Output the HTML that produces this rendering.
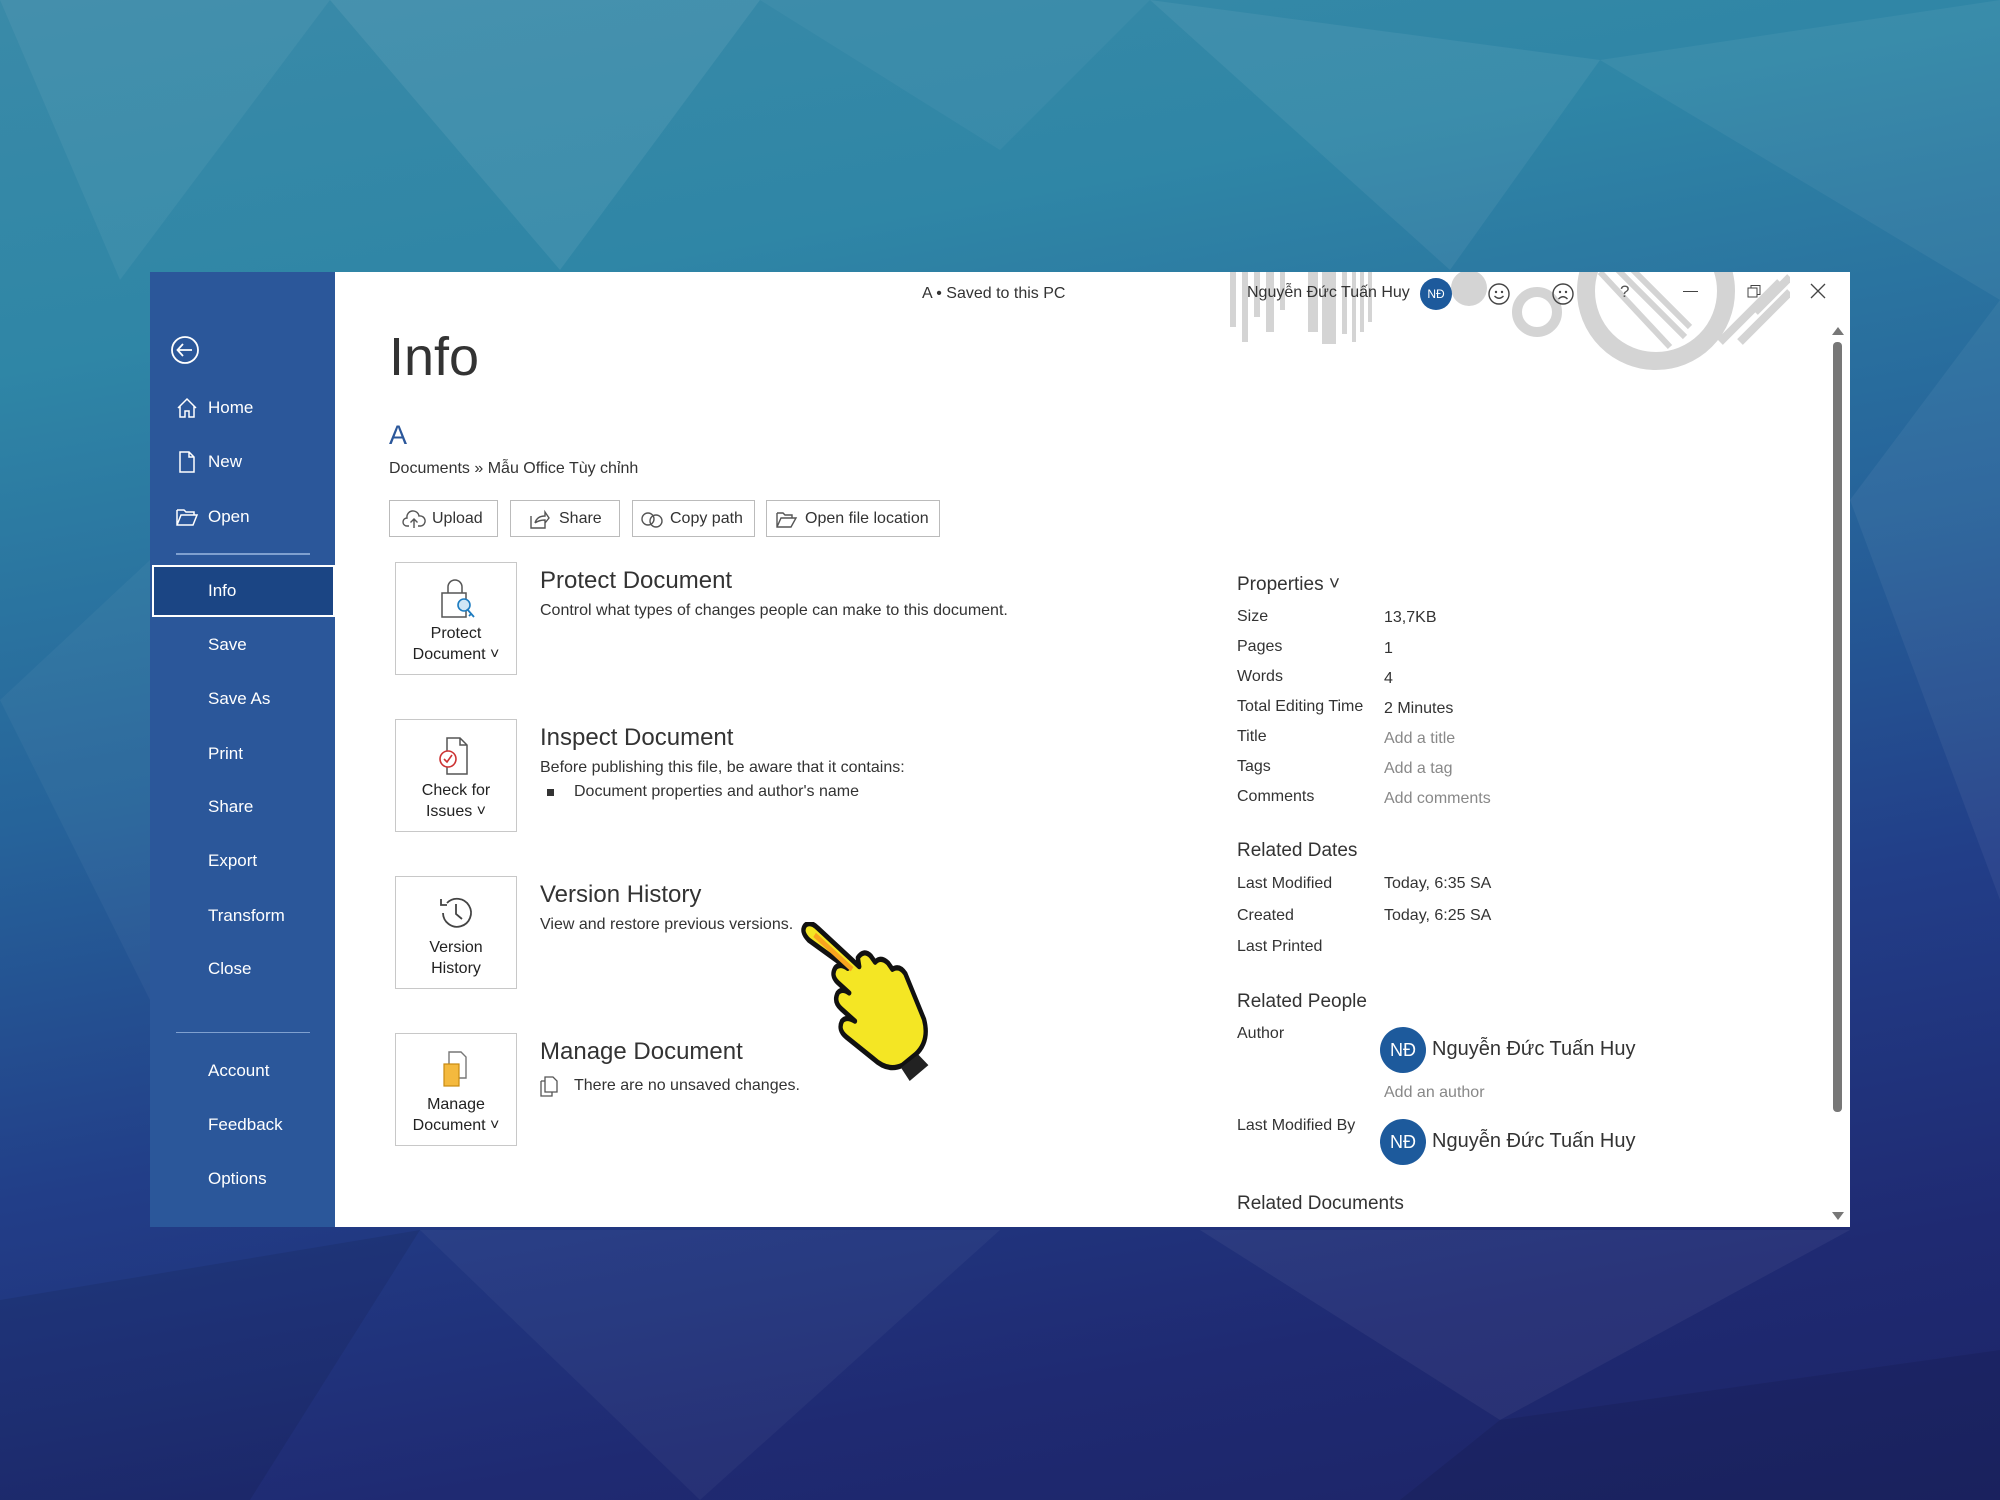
<!DOCTYPE html>
<html><head><meta charset="utf-8"><style>
*{margin:0;padding:0;box-sizing:border-box}
body{width:2000px;height:1500px;overflow:hidden;position:relative;font-family:"Liberation Sans","Noto Sans CJK SC",sans-serif;
background:linear-gradient(170deg,#3a8aa8 0%,#2f86a6 20%,#26639a 45%,#223e88 65%,#1f2a72 85%,#1d2466 100%);}
.a{position:absolute;white-space:nowrap}
#win{position:absolute;left:150px;top:272px;width:1700px;height:955px;background:#fff;overflow:hidden}
#side{position:absolute;left:0;top:0;width:185px;height:955px;background:#2b579a}
.m{position:absolute;left:58px;color:#fff;font-size:17px}
.ic{position:absolute;left:25px}
.btn{position:absolute;top:228px;height:37px;border:1px solid #bbb;background:#fff;font-size:16px;color:#333;line-height:35px;padding-left:14px}
.big{position:absolute;left:245px;width:122px;height:113px;border:1px solid #c8c8c8;text-align:center;font-size:16px;color:#222;line-height:21px}
.h{position:absolute;left:390px;font-size:24px;color:#333}
.d{position:absolute;left:390px;font-size:16px;color:#333}
.l{position:absolute;left:1087px;font-size:16px;color:#333}
.v{position:absolute;left:1234px;font-size:16px;color:#333}
.g{color:#888}
.sh{position:absolute;left:1087px;font-size:19px;color:#333}
</style></head><body>
<svg class="a" style="left:0;top:0" width="2000" height="1500">
 <g fill="#fff">
  <polygon points="0,0 330,0 120,280" opacity="0.05"/>
  <polygon points="330,0 760,0 560,270" opacity="0.07"/>
  <polygon points="760,0 1150,0 1000,150" opacity="0.04"/>
  <polygon points="1150,0 1600,60 1450,270" opacity="0.06"/>
  <polygon points="1600,60 2000,0 2000,300" opacity="0.05"/>
  <polygon points="0,700 150,560 150,1000" opacity="0.04"/>
  <polygon points="1850,500 2000,300 2000,900" opacity="0.05"/>
  <polygon points="420,1230 1000,1230 700,1500" opacity="0.04"/>
  <polygon points="1200,1230 1850,1230 1500,1420" opacity="0.05"/>
 </g>
 <g fill="#000">
  <polygon points="0,1300 420,1230 250,1500 0,1500" opacity="0.08"/>
  <polygon points="1500,1420 2000,1350 2000,1500 1400,1500" opacity="0.08"/>
 </g>
</svg>
<div id="win">
 <svg class="a" style="left:1080px;top:0" width="560" height="110" viewBox="0 0 560 110">
  <g fill="#d4d4d4">
   <rect x="0" y="0" width="6" height="55"/><rect x="12" y="0" width="6" height="70"/><rect x="24" y="0" width="6" height="45"/>
   <rect x="36" y="0" width="8" height="60"/><rect x="50" y="0" width="5" height="38"/>
   <rect x="78" y="0" width="10" height="60"/><rect x="92" y="0" width="14" height="72"/><rect x="112" y="0" width="5" height="62"/>
   <rect x="122" y="0" width="4" height="70"/><rect x="130" y="0" width="4" height="60"/><rect x="138" y="0" width="4" height="50"/>
   <circle cx="239" cy="16" r="18"/>
  </g>
  <circle cx="307" cy="40" r="20" fill="none" stroke="#d4d4d4" stroke-width="10"/>
  <circle cx="426" cy="19" r="70" fill="none" stroke="#d4d4d4" stroke-width="18"/>
  <g stroke="#d4d4d4" stroke-width="6"><line x1="370" y1="0" x2="440" y2="75"/><line x1="385" y1="-5" x2="455" y2="65"/><line x1="400" y1="-5" x2="460" y2="55"/></g>
  <g stroke="#d4d4d4" stroke-width="8"><line x1="490" y1="70" x2="550" y2="10"/><line x1="510" y1="70" x2="560" y2="20"/><line x1="525" y1="40" x2="560" y2="5"/></g>
 </svg>
 <div id="side">
  <svg class="ic" style="top:63px;left:20px" width="30" height="30"><circle cx="15" cy="15" r="13" fill="none" stroke="#fff" stroke-width="1.8"/><path d="M22 15H8M13 9L7.5 15L13 21" fill="none" stroke="#fff" stroke-width="1.8"/></svg>
  <svg class="ic" style="top:124px" width="24" height="24"><path d="M3 12L12 3L21 12M5 10V21H10V15H14V21H19V10" fill="none" stroke="#fff" stroke-width="1.5"/></svg>
  <div class="m" style="top:126px">Home</div>
  <svg class="ic" style="top:178px" width="24" height="24"><path d="M5 2H14L19 7V22H5ZM14 2V7H19" fill="none" stroke="#fff" stroke-width="1.5"/></svg>
  <div class="m" style="top:180px">New</div>
  <svg class="ic" style="top:233px" width="24" height="24"><path d="M2 5H9L11 7H19V10M2 5V20H18L22 10H6L2 20" fill="none" stroke="#fff" stroke-width="1.5"/></svg>
  <div class="m" style="top:235px">Open</div>
  <div class="a" style="left:26px;top:281px;width:134px;height:2px;background:#7fa0cf"></div>
  <div class="a" style="left:2px;top:293px;width:183px;height:52px;background:#1b4584;border:2px solid #fff"></div>
  <div class="m" style="top:309px">Info</div>
  <div class="m" style="top:363px">Save</div>
  <div class="m" style="top:417px">Save As</div>
  <div class="m" style="top:472px">Print</div>
  <div class="m" style="top:525px">Share</div>
  <div class="m" style="top:579px">Export</div>
  <div class="m" style="top:634px">Transform</div>
  <div class="m" style="top:687px">Close</div>
  <div class="a" style="left:26px;top:760px;width:134px;height:1px;background:#7fa0cf"></div>
  <div class="m" style="top:789px">Account</div>
  <div class="m" style="top:843px">Feedback</div>
  <div class="m" style="top:897px">Options</div>
 </div>
 <div class="a" style="left:772px;top:13px;font-size:16px;color:#333">A • Saved to this PC</div>
 <div class="a" style="left:1097px;top:12px;font-size:16px;color:#333">Nguyễn Đức Tuấn Huy</div>
 <div class="a" style="left:1270px;top:6px;width:32px;height:32px;border-radius:50%;background:#1d5a9c;color:#fff;font-size:12px;text-align:center;line-height:32px">NĐ</div>
 <svg class="a" style="left:1337px;top:10px" width="24" height="24"><circle cx="12" cy="12" r="10" fill="none" stroke="#444" stroke-width="1.4"/><circle cx="9" cy="10" r="1.2" fill="#444"/><circle cx="15" cy="10" r="1.2" fill="#444"/><path d="M7.5 14Q12 18.5 16.5 14" fill="none" stroke="#444" stroke-width="1.4"/></svg>
 <svg class="a" style="left:1401px;top:10px" width="24" height="24"><circle cx="12" cy="12" r="10" fill="none" stroke="#444" stroke-width="1.4"/><circle cx="9" cy="10" r="1.2" fill="#444"/><circle cx="15" cy="10" r="1.2" fill="#444"/><path d="M7.5 17Q12 12.5 16.5 17" fill="none" stroke="#444" stroke-width="1.4"/></svg>
 <div class="a" style="left:1470px;top:10px;font-size:17px;color:#555">?</div>
 <div class="a" style="left:1533px;top:19px;width:15px;height:1px;background:#444"></div>
 <svg class="a" style="left:1596px;top:12px" width="16" height="16"><rect x="2" y="4" width="9" height="9" fill="none" stroke="#444"/><path d="M5 4V1.5H14V10.5H11" fill="none" stroke="#444"/></svg>
 <svg class="a" style="left:1660px;top:11px" width="16" height="16"><path d="M1 1L15 15M15 1L1 15" stroke="#444" stroke-width="1.3"/></svg>
 <div class="a" style="left:239px;top:54px;font-size:54px;color:#333;font-weight:300">Info</div>
 <div class="a" style="left:239px;top:148px;font-size:27px;color:#2b579a">A</div>
 <div class="a" style="left:239px;top:188px;font-size:16px;color:#333">Documents » Mẫu Office Tùy chỉnh</div>
 <div class="btn" style="left:239px;width:109px;padding-left:42px">Upload</div>
 <svg class="a" style="left:252px;top:238px" width="24" height="20"><path d="M7 16H5A4 4 0 0 1 5 8A6 6 0 0 1 17 6A5 5 0 0 1 19 16H16M12 18V9M8.5 12.5L12 9L15.5 12.5" fill="none" stroke="#555" stroke-width="1.4"/></svg>
 <div class="btn" style="left:360px;width:110px;padding-left:48px">Share</div>
 <svg class="a" style="left:378px;top:236px" width="22" height="22"><path d="M3 8V20H17V15M7 15Q9 8 17 8V4L21 10L17 15V12Q11 12 7 15" fill="none" stroke="#555" stroke-width="1.4"/></svg>
 <div class="btn" style="left:482px;width:123px;padding-left:37px">Copy path</div>
 <svg class="a" style="left:490px;top:240px" width="26" height="16"><circle cx="8" cy="7" r="6" fill="none" stroke="#555" stroke-width="1.4"/><circle cx="16" cy="9" r="6" fill="none" stroke="#555" stroke-width="1.4"/></svg>
 <div class="btn" style="left:616px;width:174px;padding-left:38px">Open file location</div>
 <svg class="a" style="left:625px;top:238px" width="24" height="20"><path d="M2 3H8L10 5H17V8M2 3V17H16L21 8H6L2 17" fill="none" stroke="#555" stroke-width="1.4"/></svg>

 <div class="big" style="top:290px"><svg style="display:block;margin:14px auto 2px" width="44" height="44"><path d="M14 16V10A7 7 0 0 1 28 10V16M8 16H32V40H8Z" fill="none" stroke="#555" stroke-width="1.5"/><circle cx="30" cy="28" r="6" fill="#cfe6f5" stroke="#1e7cc0" stroke-width="1.6"/><path d="M33 32L40 40M37 37L35 39" stroke="#1e7cc0" stroke-width="1.8"/></svg>Protect<br>Document ˅</div>
 <div class="h" style="top:295px">Protect Document</div>
 <div class="d" style="top:330px">Control what types of changes people can make to this document.</div>

 <div class="big" style="top:447px"><svg style="display:block;margin:14px auto 2px" width="44" height="44"><path d="M13 4H26L33 11V40H13Z M26 4V11H33" fill="#fff" stroke="#555" stroke-width="1.5"/><circle cx="14" cy="25" r="8" fill="#fff" stroke="#c33" stroke-width="1.6"/><path d="M10 25L13 28L18 21" fill="none" stroke="#c33" stroke-width="1.6"/></svg>Check for<br>Issues ˅</div>
 <div class="h" style="top:452px">Inspect Document</div>
 <div class="d" style="top:487px">Before publishing this file, be aware that it contains:</div>
 <div class="a" style="left:397px;top:517px;width:7px;height:7px;background:#333"></div>
 <div class="d" style="left:424px;top:511px">Document properties and author's name</div>

 <div class="big" style="top:604px"><svg style="display:block;margin:14px auto 2px" width="44" height="44"><path d="M9 22A14 14 0 1 0 13 12M7 8V14H13M22 13V23L28 28" fill="none" stroke="#444" stroke-width="1.8"/></svg>Version<br>History</div>
 <div class="h" style="top:609px">Version History</div>
 <div class="d" style="top:644px">View and restore previous versions.</div>

 <div class="big" style="top:761px"><svg style="display:block;margin:14px auto 2px" width="44" height="44"><path d="M15 4H27L32 9V30H15Z" fill="#fff" stroke="#777" stroke-width="1.4"/><rect x="10" y="16" width="15" height="22" fill="#f4b93e" stroke="#c98a10" stroke-width="1.2"/></svg>Manage<br>Document ˅</div>
 <div class="h" style="top:766px">Manage Document</div>
 <svg class="a" style="left:388px;top:803px" width="22" height="22"><path d="M7 2H15L19 6V17H7Z M3 6H7M3 6V21H14V17" fill="none" stroke="#555" stroke-width="1.3"/></svg>
 <div class="d" style="left:424px;top:805px">There are no unsaved changes.</div>

 <div class="sh" style="top:302px">Properties ˅</div>
 <div class="l" style="top:336px">Size</div><div class="v" style="top:337px">13,7KB</div>
 <div class="l" style="top:366px">Pages</div><div class="v" style="top:368px">1</div>
 <div class="l" style="top:396px">Words</div><div class="v" style="top:398px">4</div>
 <div class="l" style="top:426px">Total Editing Time</div><div class="v" style="top:428px">2 Minutes</div>
 <div class="l" style="top:456px">Title</div><div class="v g" style="top:458px">Add a title</div>
 <div class="l" style="top:486px">Tags</div><div class="v g" style="top:488px">Add a tag</div>
 <div class="l" style="top:516px">Comments</div><div class="v g" style="top:518px">Add comments</div>
 <div class="sh" style="top:568px">Related Dates</div>
 <div class="l" style="top:603px">Last Modified</div><div class="v" style="top:603px">Today, 6:35 SA</div>
 <div class="l" style="top:635px">Created</div><div class="v" style="top:635px">Today, 6:25 SA</div>
 <div class="l" style="top:666px">Last Printed</div>
 <div class="sh" style="top:719px">Related People</div>
 <div class="l" style="top:753px">Author</div>
 <div class="a" style="left:1230px;top:755px;width:46px;height:46px;border-radius:50%;background:#1d5a9c;color:#fff;font-size:18px;text-align:center;line-height:46px">NĐ</div>
 <div class="a" style="left:1282px;top:766px;font-size:20px;color:#333">Nguyễn Đức Tuấn Huy</div>
 <div class="v g" style="top:812px">Add an author</div>
 <div class="l" style="top:845px">Last Modified By</div>
 <div class="a" style="left:1230px;top:847px;width:46px;height:46px;border-radius:50%;background:#1d5a9c;color:#fff;font-size:18px;text-align:center;line-height:46px">NĐ</div>
 <div class="a" style="left:1282px;top:858px;font-size:20px;color:#333">Nguyễn Đức Tuấn Huy</div>
 <div class="sh" style="top:921px">Related Documents</div>

 <div class="a" style="left:1683px;top:70px;width:9px;height:770px;border-radius:4px;background:#777"></div>
 <div class="a" style="left:1682px;top:55px;width:0;height:0;border-left:6px solid transparent;border-right:6px solid transparent;border-bottom:8px solid #777"></div>
 <div class="a" style="left:1682px;top:940px;width:0;height:0;border-left:6px solid transparent;border-right:6px solid transparent;border-top:8px solid #777"></div>

 <svg class="a" style="left:648px;top:650px" width="290" height="200" viewBox="648 650 290 200">
  <g transform="translate(656 655) scale(0.72 0.88) translate(-656 -655)">
  <path d="M660 670Q648 660 655 653Q662 648 672 656L730 700L728 690Q736 680 746 688L752 695Q760 688 770 696L776 703Q786 698 794 708L820 760Q828 785 808 800L790 812Q770 820 750 805L712 780Q700 772 706 762Q712 756 724 762L705 748Q694 740 700 730Q706 724 716 730L700 718Q690 710 697 701Q704 696 714 702Z" fill="#f4e624" stroke="#111" stroke-width="6" stroke-linejoin="round"/>
  <path d="M788 815L812 800L826 812L800 830Z" fill="#222"/>
  <path d="M668 664L720 703" stroke="#f9a51f" stroke-width="6"/>
  </g>
 </svg>
</div>
</body></html>
